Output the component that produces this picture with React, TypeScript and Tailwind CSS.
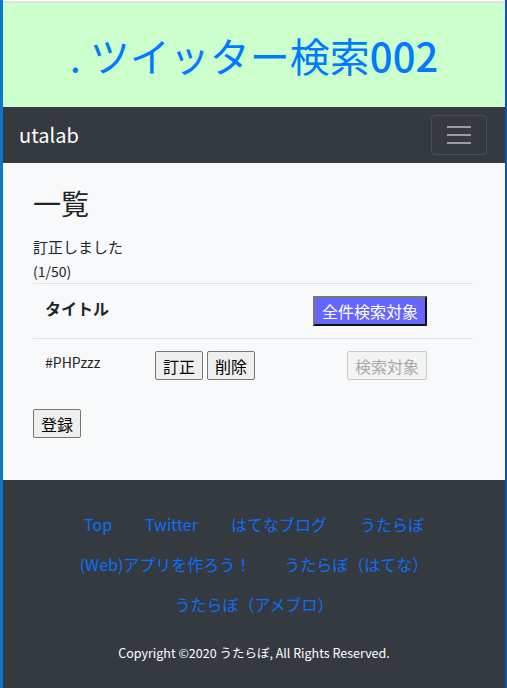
import React from "react";

const btn =
  "h-[29px] px-[7px] bg-[#efefef] border border-[#767676] rounded-[2px] text-[16px] leading-[20px] text-black";

export default function App() {
  return (
    <div
      className="min-h-[688px] w-[507px] flex bg-white"
      style={{ fontFamily: '"Noto Sans CJK JP", "Noto Sans", sans-serif' }}
    >
      <div className="w-[3px] bg-[#0b78d0] shrink-0" />
      <div className="flex-1 flex flex-col">
        <div className="h-[3px] border-t border-white bg-[#e0e0e0]" />
        {/* Title */}
        <div className="h-[104px] bg-[#ccffcc] flex items-center justify-center">
          <h1 className="text-[40px] leading-[48px] text-[#007bff] whitespace-nowrap">
            . ツイッター検索<span className="font-medium">002</span>
          </h1>
        </div>
        {/* Navbar */}
        <div className="h-[56px] bg-[#343a40] flex items-center justify-between pl-[16px] pr-[18px]">
          <span className="text-white text-[20px] leading-[30px]">utalab</span>
          <div className="w-[56px] h-[40px] border border-white/10 rounded-[4px] flex flex-col items-center justify-center gap-[6px]">
            <div className="w-[24px] h-[2px] bg-white/50" />
            <div className="w-[24px] h-[2px] bg-white/50" />
            <div className="w-[24px] h-[2px] bg-white/50" />
          </div>
        </div>
        {/* Main */}
        <div className="bg-[#f8f9fa] h-[317px] px-[30px] pt-[23px]">
          <h3 className="text-[28px] leading-[34px] text-[#212529]">一覧</h3>
          <div className="mt-[15px] text-[15px] leading-[24px] text-[#212529]">訂正しました</div>
          <div className="text-[14px] leading-[24px] text-[#212529]">(1/50)</div>
          <div className="w-[440px] border-t border-[#dee2e6]">
            <div className="grid grid-cols-[110px_158px_172px] border-b border-[#dee2e6] h-[55px]">
              <div className="pl-[12px] pt-[12px] text-[16px] leading-[24px] font-bold text-[#212529]">タイトル</div>
              <div />
              <div className="pl-[12px] pt-[12px]">
                <button className="h-[30px] px-[7px] bg-[#6666ff] text-white text-[16px] leading-[20px] border-2 border-t-[#767676] border-l-[#767676] border-b-[#111] border-r-[#111]">
                  全件検索対象
                </button>
              </div>
            </div>
            <div className="grid grid-cols-[110px_158px_172px] h-[53px]">
              <div className="pl-[12px] pt-[13px] text-[14px] leading-[21px] text-[#212529]">#PHPzzz</div>
              <div className="pl-[12px] pt-[12px] flex gap-[4px] items-start">
                <button className={btn}>訂正</button>
                <button className={btn}>削除</button>
              </div>
              <div className="pt-[12px] flex justify-center items-start">
                <button className="h-[29px] px-[7px] bg-[#efefef]/60 border border-[#c8c8c8] rounded-[2px] text-[16px] leading-[20px] text-[#a8a8a8]">
                  検索対象
                </button>
              </div>
            </div>
          </div>
          <div className="mt-[17px]">
            <button className={btn}>登録</button>
          </div>
        </div>
        {/* Footer */}
        <div className="flex-1 bg-[#343a40] pt-[32px] flex flex-col items-center">
          <div className="flex flex-wrap justify-center gap-x-[33px] gap-y-[16px] w-[440px] text-[16px] leading-[24px] text-[#0d6efd]">
            <span>Top</span>
            <span>Twitter</span>
            <span>はてなブログ</span>
            <span>うたらぼ</span>
            <span>(Web)アプリを作ろう！</span>
            <span>うたらぼ（はてな）</span>
            <span>うたらぼ（アメブロ）</span>
          </div>
          <div className="mt-[27px] text-white text-[12.5px] leading-[20px]">
            Copyright ©2020 うたらぼ, All Rights Reserved.
          </div>
        </div>
      </div>
      <div className="w-[2px] bg-[#0f4fae] shrink-0" />
    </div>
  );
}
